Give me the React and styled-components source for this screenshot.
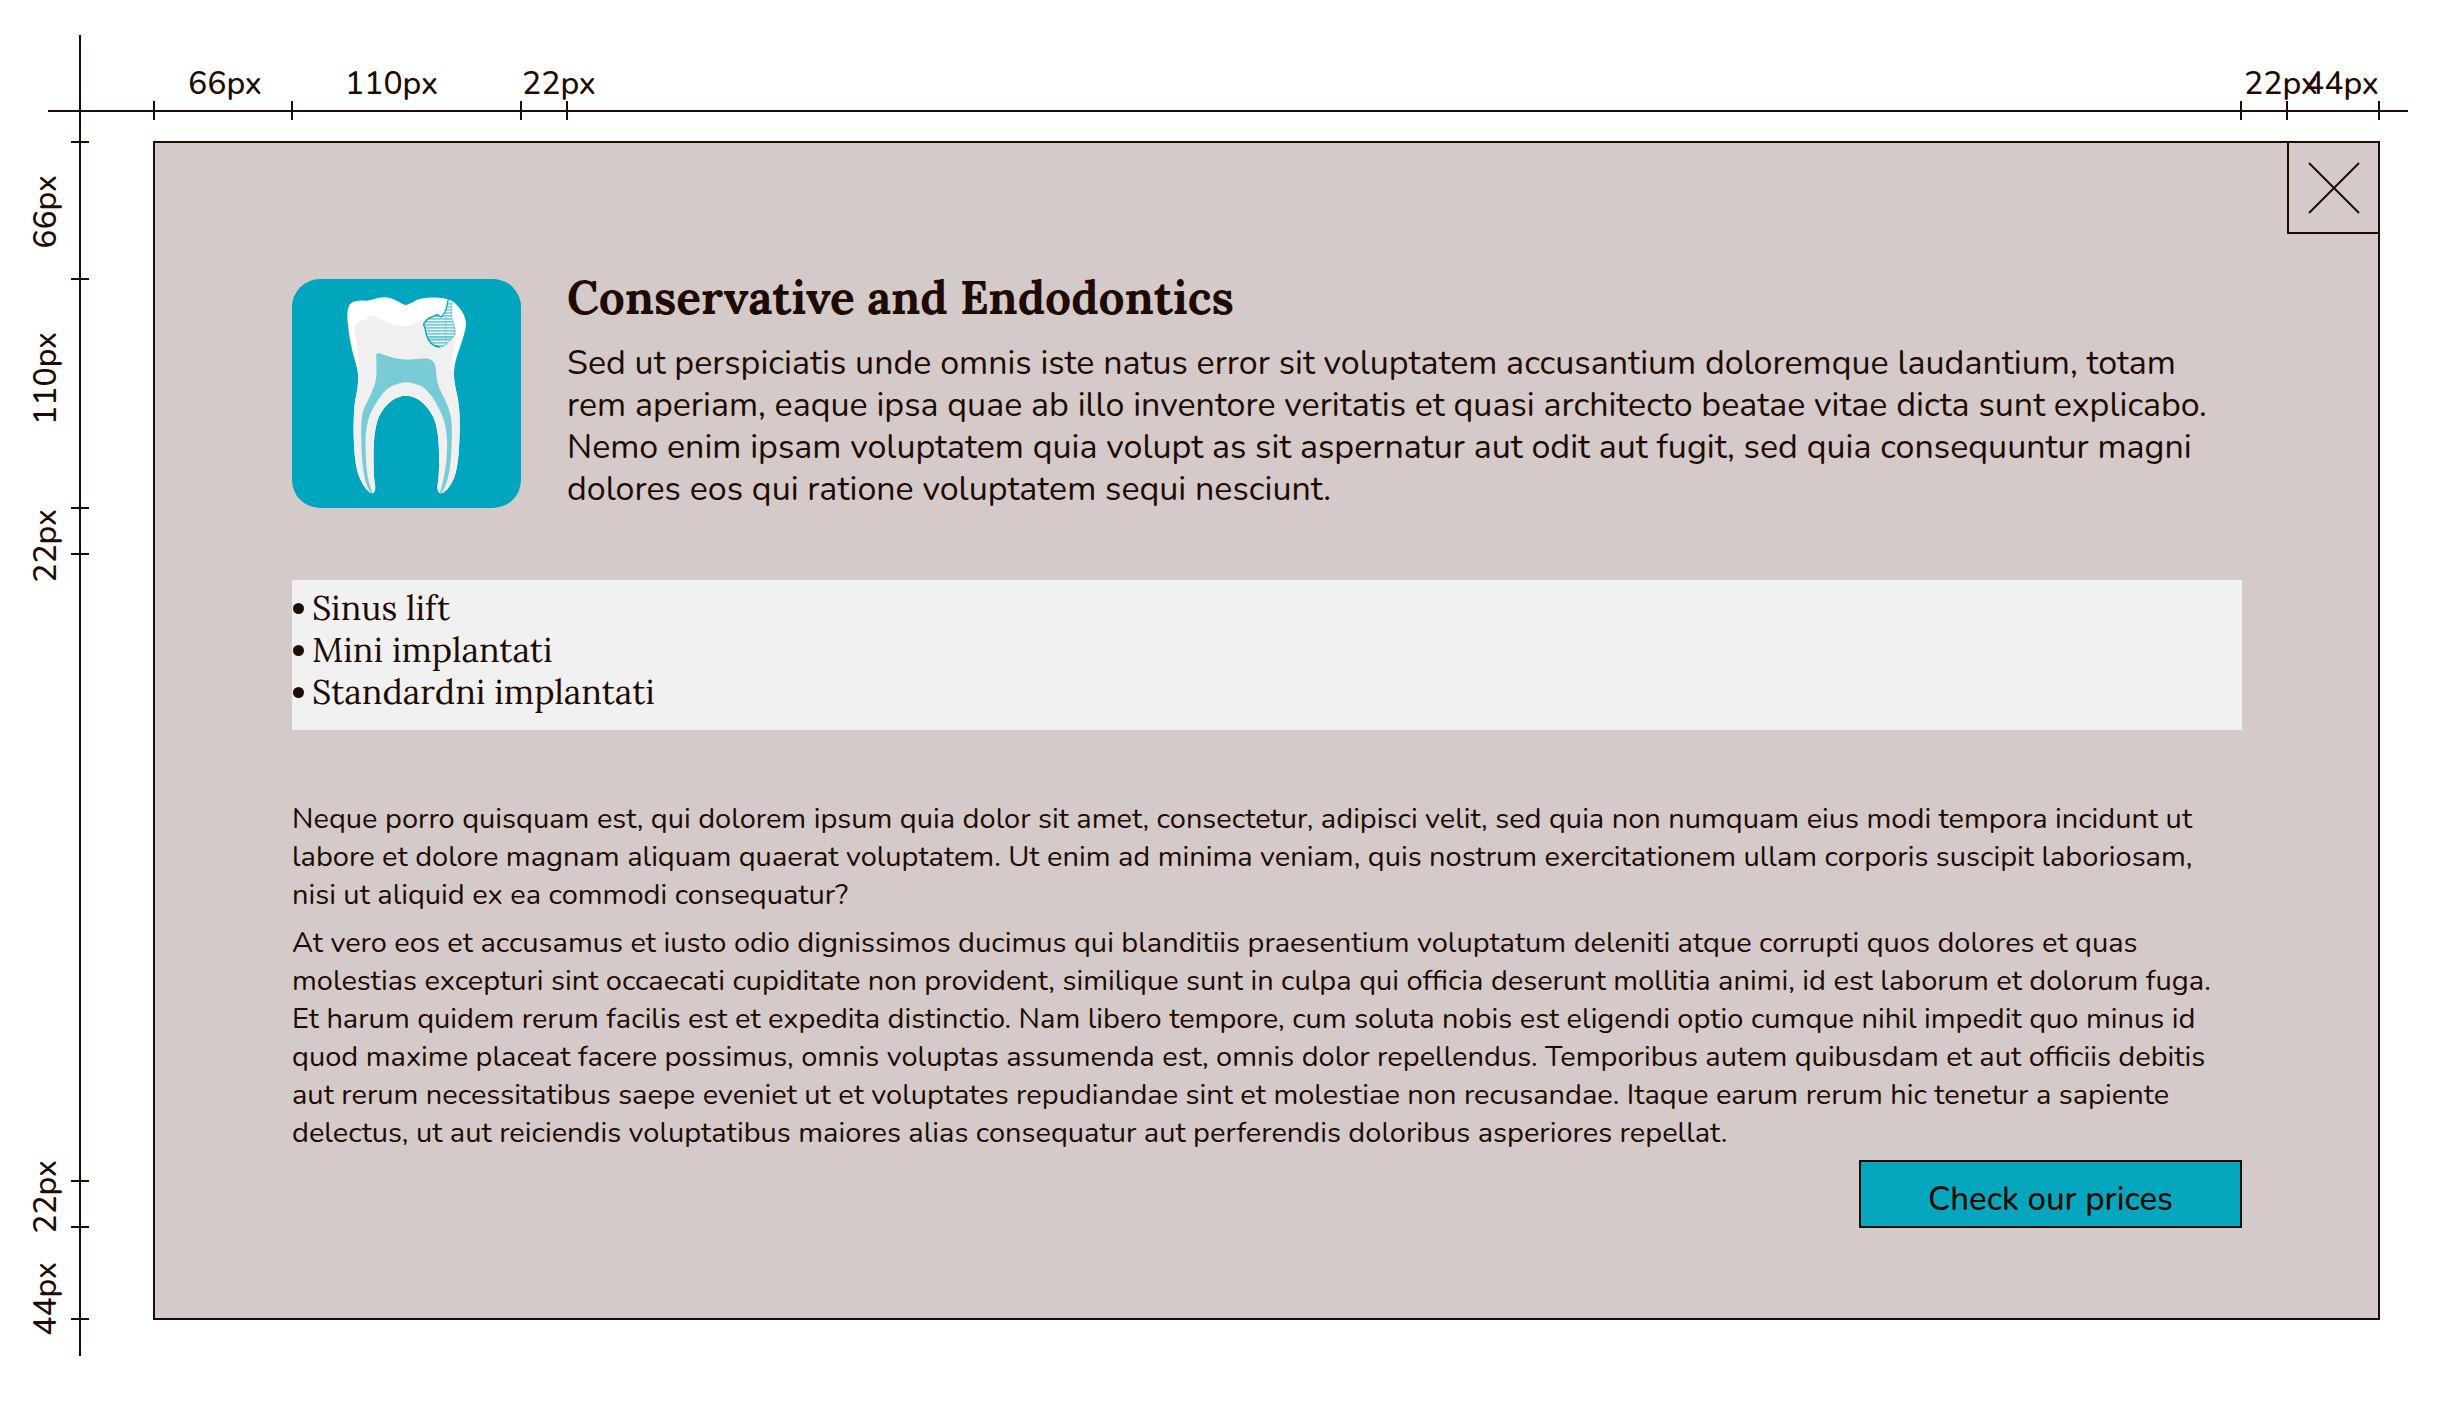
import React from "react";
import styled, { createGlobalStyle, css } from "styled-components";

const ink = "#1f0b04";
const teal = "#00a6bd";
const sans = `Nunito, "Noto Sans", sans-serif`;
const serif = `Lora, "Liberation Serif", serif`;

const GlobalStyle = createGlobalStyle`
  *, *::before, *::after { box-sizing: border-box; }
  body { margin: 0; background: #fff; color: ${ink}; font-family: ${sans}; }
`;

const Sheet = styled.div`
  display: grid;
  grid-template-columns: 153px 1fr 28px;
  grid-template-rows: 141px auto 36px;
  padding-right: 38px;
`;

const TopRuler = styled.div`
  grid-area: 1 / 1 / 2 / -1;
  display: grid;
  grid-template-columns: 105px 138px 229px 46px 1fr 46px 92px 28px;
  grid-template-rows: 35px 19px;
  margin-left: 48px;
  padding-top: 66px;
`;

const SideRuler = styled.div`
  grid-area: 1 / 1 / -1 / 2;
  display: grid;
  grid-template-rows: 106px 137px 229px 46px 1fr 46px 92px 36px;
  grid-template-columns: 43px 18px;
  margin-top: 35px;
  padding-left: 28px;
`;

const Axis = styled.span`
  background: ${ink};
  ${({ $side }) =>
    $side
      ? css`grid-area: 1 / 2 / -1 / 3; justify-self: center; width: 2px;`
      : css`grid-area: 2 / 1 / 3 / -1; align-self: center; height: 2px;`}
`;

const Tick = styled.span`
  background: ${ink};
  ${({ $side, $cell, $end }) =>
    $side
      ? css`grid-area: ${$cell} / 2; align-self: ${$end ? "end" : "start"}; height: 2px;`
      : css`grid-area: 2 / ${$cell}; justify-self: ${$end ? "end" : "start"}; width: 2px;`}
`;

const Measure = styled.span`
  font-size: 32px;
  font-weight: 500;
  line-height: 36px;
  white-space: nowrap;
  ${({ $side, $cell, $inset }) =>
    $side
      ? css`
          grid-area: ${$cell} / 1;
          place-self: start;
          margin-top: ${$inset}px;
          writing-mode: vertical-rl;
          transform: rotate(180deg);
        `
      : css`
          grid-area: 1 / ${$cell};
          justify-self: start;
          margin-left: ${$inset}px;
        `}
`;

const Card = styled.main`
  grid-area: 2 / 2;
  position: relative;
  padding: 136px 136px 90px 137px;
  border: 2px solid ${ink};
  background: #d4caca;
`;

const CloseButton = styled.button`
  position: absolute;
  top: -2px;
  right: -2px;
  display: grid;
  place-items: center;
  width: 93px;
  height: 93px;
  padding: 0;
  border: 2px solid ${ink};
  background: transparent;
  cursor: pointer;
`;

const Intro = styled.header`
  display: grid;
  grid-template-columns: 229px 1fr;
  column-gap: 46px;
  align-items: start;
`;

const Badge = styled.svg`
  display: block;
  width: 229px;
  height: 229px;
  border-radius: 28px;
  background: ${teal};
`;

const Title = styled.h1`
  margin: 0 0 25px;
  font: 700 46px/38px ${serif};
`;

const Lead = styled.p`
  margin: 0;
  padding-right: 16px;
  font-size: 34px;
  line-height: 42px;
`;

const Services = styled.ul`
  margin: 70px 0;
  padding: 7px 0 17px;
  background: #f1f1f1;
  list-style: none;
  font: 400 34px/42px ${serif};
`;

const Service = styled.li`
  display: grid;
  grid-template-columns: 20px 1fr;
  align-items: center;

  &::before {
    content: "";
    width: 11px;
    height: 11px;
    margin-left: 1px;
    border-radius: 50%;
    background: ${ink};
  }
`;

const Copy = styled.p`
  margin: 0;
  font-size: 29px;
  line-height: 38px;

  & + & {
    margin-top: 10px;
  }
`;

const Actions = styled.div`
  display: flex;
  justify-content: flex-end;
  margin-top: 8px;
`;

const PricesButton = styled.button`
  width: 383px;
  height: 68px;
  padding: 12px 0 0;
  border: 2px solid ${ink};
  background: #06a7be;
  color: ${ink};
  font: 500 33px/42px ${sans};
  cursor: pointer;
`;

const ticks = [
  { cell: 2 }, { cell: 3 }, { cell: 4 }, { cell: 5 },
  { cell: 5, end: true }, { cell: 6, end: true }, { cell: 7, end: true },
];
const topMeasures = [
  { cell: 2, text: "66px", inset: 35 },
  { cell: 3, text: "110px", inset: 54 },
  { cell: 4, text: "22px", inset: 2 },
  { cell: 6, text: "22px", inset: 2 },
  { cell: 7, text: "44px", inset: 17 },
];
const sideMeasures = [
  { cell: 2, text: "66px", inset: 34 },
  { cell: 3, text: "110px", inset: 54 },
  { cell: 4, text: "22px", inset: 2 },
  { cell: 6, text: "22px", inset: -22 },
  { cell: 7, text: "44px", inset: 34 },
];

function Tooth() {
  const roots =
    "C265 350 262 380 258 400 C250 430 250 470 249 500 C249 550 252 610 264 645 C275 675 292 698 305 700 C315 700 315 685 313 670 C309 650 309 620 309 590 C309 540 313 500 325 470 C345 430 375 407 408 407 C440 407 470 435 488 470 C502 500 505 540 506 590 C506 630 505 655 502 670 C500 690 502 700 511 700 C528 697 545 670 552 650 C564 620 567 560 568 500 C568 460 566 430 559 400 C552 370 549 340 551 330";
  const stripes = [];
  for (let y = 131; y < 262; y += 9) stripes.push(y);
  return (
    <Badge viewBox="64 56 688 688" role="img" aria-label="Tooth">
      <clipPath id="cavity">
        <path d="M533 119 C530 140 526 155 516 167 C513 172 507 168 500 163 C492 166 487 171 478 172 C470 177 463 183 459 192 C463 200 466 210 467 222 C472 240 485 258 508 261 C525 258 542 240 554 222 L554 206 L549 190 L544 172 L544 121Z" />
      </clipPath>
      <path
        fill="#fff"
        d={`M406 135 C385 128 370 112 342 111 C318 111 305 121 285 121 C265 120 245 121 236 135 C228 150 230 175 233 200 C238 250 250 290 260 325 ${roots} C555 285 585 230 587 190 C587 165 565 135 545 122 C520 108 480 110 450 115 C435 119 420 130 406 135Z`}
      />
      <path
        fill="#f0f0f0"
        d={`M307 165 C295 168 290 180 275 180 C258 182 252 195 253 215 C255 235 263 250 263 280 C263 300 266 320 261 330 ${roots} L543 329 C541 300 550 275 556 235 C558 215 555 195 545 180 C530 166 490 163 470 170 C450 178 435 196 406 198 C370 198 330 178 307 165Z`}
      />
      <path
        fill="#79ccd6"
        d="M317 283 C320 278 328 278 334 282 C355 289 380 297 408 298 C430 298 450 294 470 295 C488 297 496 310 497 335 C498 365 508 390 522 415 C538 450 543 465 544 500 C545 560 542 620 532 655 C525 680 517 695 511 700 C508 700 508 695 511 690 C525 640 530 600 530 545 C529 500 518 465 500 435 C485 405 465 385 450 376 C435 372 425 366 405 366 C385 368 375 375 362 378 C340 390 325 415 310 440 C293 470 286 500 285 545 C285 600 288 640 296 670 C300 685 305 695 306 700 C300 700 290 680 285 665 C274 620 271 560 272 500 C273 465 277 450 290 425 C310 385 318 365 318 335Z"
      />
      <g clipPath="url(#cavity)">
        <rect x="455" y="115" width="105" height="50" fill="#fff" />
        <rect x="455" y="165" width="105" height="100" fill="#f4f6f6" />
        <rect x="455" y="229" width="105" height="9" fill="#b5dfe5" />
        {stripes.map((y) => (
          <path key={y} d={`M455 ${y}H560`} stroke="#21afc3" strokeWidth="3" />
        ))}
      </g>
      <path d="M526 170V258" stroke="#21afc3" strokeWidth="1.5" strokeDasharray="5 4" />
      <path
        d="M508 261 C525 258 542 240 554 222 L554 206 L549 190 L544 172 L544 121"
        fill="none" stroke="#4dbdcd" strokeWidth="2"
      />
      <path
        d="M533 119 C530 140 526 155 516 167 C513 172 507 168 500 163 C492 166 487 171 478 172 C470 177 463 183 459 192 C463 200 466 210 467 222 C472 240 485 258 508 261"
        fill="none" stroke={teal} strokeWidth="4" strokeLinejoin="round"
      />
    </Badge>
  );
}

export default function App() {
  return (
    <>
      <GlobalStyle />
      <Sheet>
        <TopRuler>
          <Axis />
          {ticks.map((t) => (
            <Tick key={`${t.cell}${t.end}`} $cell={t.cell} $end={t.end} />
          ))}
          {topMeasures.map((m) => (
            <Measure key={m.cell} $cell={m.cell} $inset={m.inset}>{m.text}</Measure>
          ))}
        </TopRuler>
        <SideRuler>
          <Axis $side />
          {ticks.map((t) => (
            <Tick key={`${t.cell}${t.end}`} $side $cell={t.cell} $end={t.end} />
          ))}
          {sideMeasures.map((m) => (
            <Measure key={m.cell} $side $cell={m.cell} $inset={m.inset}>{m.text}</Measure>
          ))}
        </SideRuler>
        <Card>
          <CloseButton type="button" aria-label="Close">
            <svg width="52" height="52" viewBox="0 0 52 52" fill="none" stroke={ink} strokeWidth="2">
              <path d="M1 1L51 51M51 1L1 51" />
            </svg>
          </CloseButton>
          <Intro>
            <Tooth />
            <div>
              <Title>Conservative and Endodontics</Title>
              <Lead>
                Sed ut perspiciatis unde omnis iste natus error sit voluptatem accusantium doloremque
                laudantium, totam rem aperiam, eaque ipsa quae ab illo inventore veritatis et quasi
                architecto beatae vitae dicta sunt explicabo. Nemo enim ipsam voluptatem quia volupt as
                sit aspernatur aut odit aut fugit, sed quia consequuntur magni dolores eos qui ratione
                voluptatem sequi nesciunt.
              </Lead>
            </div>
          </Intro>
          <Services>
            <Service>Sinus lift</Service>
            <Service>Mini implantati</Service>
            <Service>Standardni implantati</Service>
          </Services>
          <Copy>
            Neque porro quisquam est, qui dolorem ipsum quia dolor sit amet, consectetur, adipisci
            velit, sed quia non numquam eius modi tempora incidunt ut labore et dolore magnam aliquam
            quaerat voluptatem. Ut enim ad minima veniam, quis nostrum exercitationem ullam corporis
            suscipit laboriosam, nisi ut aliquid ex ea commodi consequatur?
          </Copy>
          <Copy>
            At vero eos et accusamus et iusto odio dignissimos ducimus qui blanditiis praesentium
            voluptatum deleniti atque corrupti quos dolores et quas molestias excepturi sint occaecati
            cupiditate non provident, similique sunt in culpa qui officia deserunt mollitia animi, id
            est laborum et dolorum fuga. Et harum quidem rerum facilis est et expedita distinctio. Nam
            libero tempore, cum soluta nobis est eligendi optio cumque nihil impedit quo minus id quod
            maxime placeat facere possimus, omnis voluptas assumenda est, omnis dolor repellendus.
            Temporibus autem quibusdam et aut officiis debitis aut rerum necessitatibus saepe eveniet
            ut et voluptates repudiandae sint et molestiae non recusandae. Itaque earum rerum hic
            tenetur a sapiente delectus, ut aut reiciendis voluptatibus maiores alias consequatur aut
            perferendis doloribus asperiores repellat.
          </Copy>
          <Actions>
            <PricesButton type="button">Check our prices</PricesButton>
          </Actions>
        </Card>
      </Sheet>
    </>
  );
}
